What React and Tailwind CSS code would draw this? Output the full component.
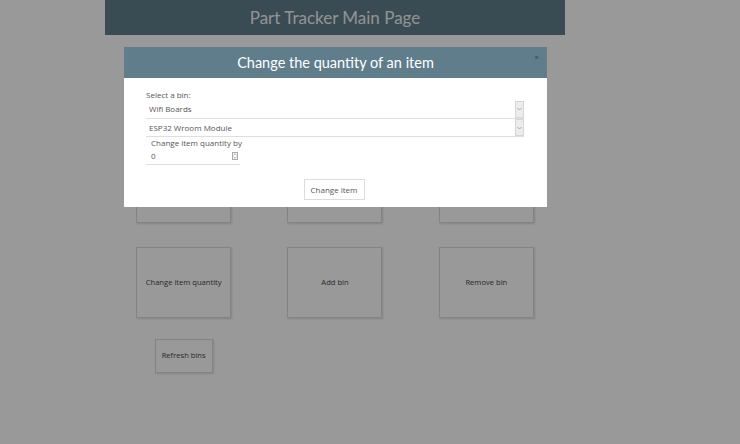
import React from 'react';

const font = { fontFamily: '"Open Sans", "Noto Sans", sans-serif' };
const titleFont = { fontFamily: 'Lato, "Open Sans", sans-serif' };

// Small grey arrow box on the right of the fake selects
const ArrowBox = () => (
  <div className="w-[9px] h-[17px] bg-[#ececec] border border-[#d6d6d6] flex items-center justify-center">
    <svg width="5" height="4" viewBox="0 0 5 4">
      <path d="M0.5 1 L2.5 3 L4.5 1" fill="none" stroke="#999" strokeWidth="0.8" />
    </svg>
  </div>
);

const Card = ({ label }) => (
  <div className="flex justify-center">
    <div className="w-[95px] h-[71px] border border-[#dcdcdc] shadow-[1px_1px_2px_rgba(0,0,0,0.15)] flex items-center justify-center text-[7.6px] text-[#444]">
      {label}
    </div>
  </div>
);

export default function App() {
  return (
    <div className="relative w-[740px] h-[444px] bg-white overflow-hidden" style={font}>
      {/* page under the modal */}
      <div className="w-[460px] ml-[105px]">
        <div className="h-[35px] bg-[#607D8B] flex items-center justify-center text-[17px] text-[#f4f4f4]" style={titleFont}>
          Part Tracker Main Page
        </div>
        {/* first row sits behind the modal, its labels are hidden */}
        <div className="grid grid-cols-3 gap-y-[24px] mt-[117px] px-[3px]">
          <Card label="" />
          <Card label="" />
          <Card label="" />
          <Card label="Change item quantity" />
          <Card label="Add bin" />
          <Card label="Remove bin" />
          <div className="flex justify-center">
            <div className="mt-[-3px] w-[58px] h-[34px] border border-[#dcdcdc] shadow-[1px_1px_2px_rgba(0,0,0,0.15)] flex items-center justify-center text-[7.6px] text-[#444]">
              Refresh bins
            </div>
          </div>
        </div>
      </div>

      {/* dimming overlay */}
      <div className="absolute inset-0 bg-black/40" />

      {/* modal */}
      <div className="absolute left-[124px] top-[47px] w-[423px] h-[160px] bg-white">
        <div className="relative h-[31px] bg-[#607D8B] flex items-center justify-center text-[14.5px] text-white" style={titleFont}>
          Change the quantity of an item
          <span className="absolute right-[8px] top-[6px] text-[8px] leading-none text-[#33444c]">×</span>
        </div>
        <div className="pl-[22px] pr-[23px] pt-[12px] text-[8px] text-[#555]">
          <div className="leading-[10px]">Select a bin:</div>
          <div className="h-[19px] border-b border-[#dedede] flex items-center justify-between">
            <span className="pl-[3px]">Wifi Boards</span>
            <ArrowBox />
          </div>
          <div className="h-[18px] border-b border-[#dedede] flex items-center justify-between">
            <span className="pl-[3px]">ESP32 Wroom Module</span>
            <ArrowBox />
          </div>
          <div className="pl-[5px] mt-[1px] leading-[10px]">Change item quantity by</div>
          <div className="w-[94px] h-[17px] border-b border-[#dedede] flex items-center justify-between">
            <span className="pl-[5px]">0</span>
            <div className="w-[6px] h-[8px] border border-[#aaa] mr-[2px] flex flex-col items-center justify-center">
              <svg width="4" height="6" viewBox="0 0 4 6">
                <path d="M0.5 2 L2 0.8 L3.5 2 M0.5 4 L2 5.2 L3.5 4" fill="none" stroke="#666" strokeWidth="0.6" />
              </svg>
            </div>
          </div>
          <div className="flex justify-center mt-[14px]">
            <div className="w-[61px] h-[21px] border border-[#dcdcdc] flex items-center justify-center text-[#555] ml-[-2px]">
              Change item
            </div>
          </div>
        </div>
      </div>
    </div>
  );
}
